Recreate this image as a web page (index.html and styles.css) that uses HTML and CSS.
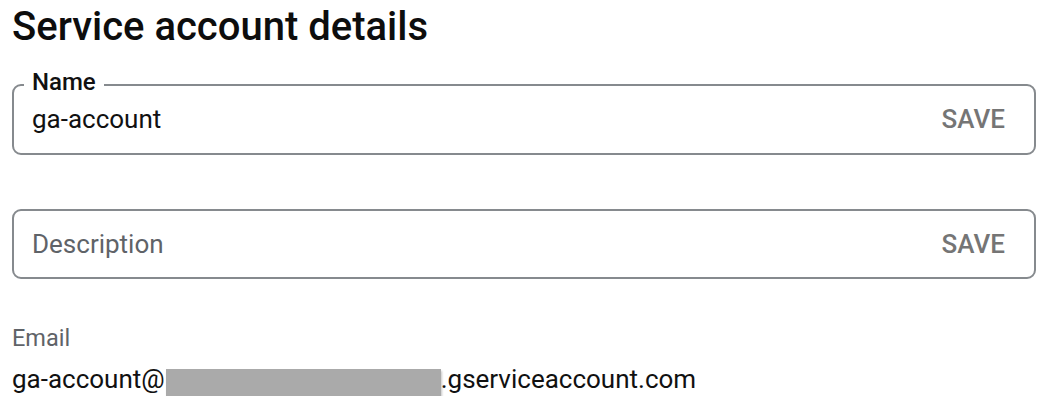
FILE: index.html
```html
<!DOCTYPE html>
<html lang="en">
<head>
<meta charset="utf-8">
<title>Service account details</title>
<link rel="stylesheet" href="styles.css">
</head>
<body>
<main class="page">
  <h1 class="title">Service account details</h1>

  <fieldset class="field field--filled">
    <legend class="field-label">Name</legend>
    <span class="field-value">ga-account</span>
    <span class="save">SAVE</span>
  </fieldset>

  <fieldset class="field field--empty">
    <span class="field-placeholder">Description</span>
    <span class="save">SAVE</span>
  </fieldset>

  <div class="email">
    <div class="email-label">Email</div>
    <div class="email-value">ga-account@<span class="redacted"></span>.gserviceaccount.com</div>
  </div>
</main>
</body>
</html>
```

FILE: styles.css
```css
html, body {
  margin: 0;
  padding: 0;
  background: #ffffff;
}

body {
  font-family: Roboto, "Liberation Sans", Arial, sans-serif;
  color: #000000;
}

.page {
  padding: 0 20px 0 12px;
}

.title {
  margin: 0;
  padding-top: 4px;
  font-size: 40px;
  font-weight: 500;
  line-height: 46px;
  color: #0d0d0d;
}

.field {
  margin: 0;
  box-sizing: border-box;
  border: 2px solid #868a8e;
  border-radius: 9px;
  display: flex;
  align-items: center;
  justify-content: space-between;
  padding: 0 29px 0 18px;
  min-width: 0;
}

.field--filled {
  margin-top: 20px;
  height: 85px;
  padding-bottom: 15px;
}

.field-label {
  margin-left: -8px;
  padding: 0 8px 6px 8px;
  font-size: 24px;
  font-weight: 500;
  line-height: 24px;
  color: #111111;
}

.field-value {
  font-size: 26px;
  color: #111111;
}

.field--empty {
  margin-top: 54px;
  height: 70px;
}

.field-placeholder {
  font-size: 26px;
  color: #5f6368;
}

.save {
  font-size: 26px;
  font-weight: 500;
  color: #757575;
}

.email {
  margin-top: 45px;
}

.email-label {
  font-size: 23.5px;
  line-height: 28px;
  color: #5f6368;
}

.email-value {
  margin-top: 12px;
  font-size: 26px;
  line-height: 30px;
  color: #111111;
  display: flex;
  align-items: flex-start;
}

.redacted {
  flex: none;
  width: 275px;
  height: 27px;
  margin: 5px 0 0 1px;
  background: #aaaaaa;
  box-shadow: 1px 2px 2px rgba(0, 0, 0, 0.22);
}
```
